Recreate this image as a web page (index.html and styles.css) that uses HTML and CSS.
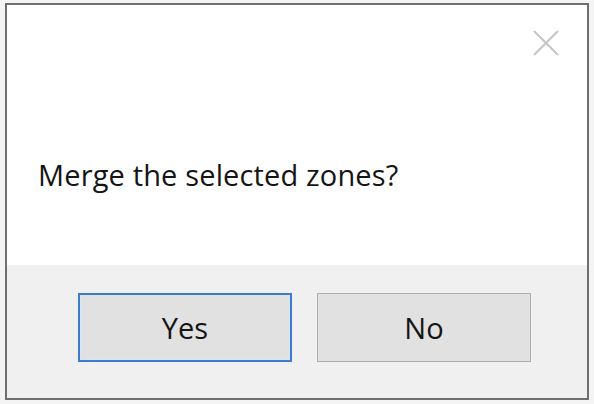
FILE: index.html
```html
<!DOCTYPE html>
<html>
<head>
<meta charset="utf-8">
<link rel="stylesheet" href="styles.css">
</head>
<body>
<div class="dialog">
  <div class="content">
    <div class="titlebar">
      <svg class="close" width="28" height="28" viewBox="0 0 28 28"><path d="M2 2 L26 26 M26 2 L2 26" stroke="#c6c6c6" stroke-width="2.2" fill="none"/></svg>
    </div>
    <p class="message">Merge the selected zones?</p>
  </div>
  <div class="footer">
    <button class="btn default">Yes</button>
    <button class="btn">No</button>
  </div>
</div>
</body>
</html>
```
FILE: styles.css
```css
html, body {
  margin: 0;
  padding: 0;
  background: #f4f4f4;
}
body {
  padding: 3px 4px 2px 5px;
  font-family: "Open Sans", "Noto Sans", sans-serif;
}
.dialog {
  width: 584px;
  height: 397px;
  border: 2px solid #6f6f6f;
  background: #ffffff;
  display: flex;
  flex-direction: column;
  box-sizing: border-box;
}
.content {
  height: 260px;
  background: #ffffff;
  display: flex;
  flex-direction: column;
}
.titlebar {
  display: flex;
  justify-content: flex-end;
  padding: 24px 27px 0 0;
}
.message {
  margin: 0;
  padding: 0 0 0 31px;
  margin-top: 98px;
  font-size: 29px;
  letter-spacing: 0.15px;
  color: #151515;
}
.footer {
  flex: 1;
  background: #f0f0f0;
  display: flex;
  gap: 25px;
  padding: 28px 0 0 71px;
}
.btn {
  width: 214px;
  height: 69px;
  background: #e1e1e1;
  border: 1px solid #adadad;
  font-family: inherit;
  font-size: 29px;
  color: #151515;
  padding: 0;
  box-sizing: border-box;
}
.btn.default {
  border: 2px solid #3d7bcc;
  box-shadow: inset 0 0 0 1px #d6e6f7;
}
```
